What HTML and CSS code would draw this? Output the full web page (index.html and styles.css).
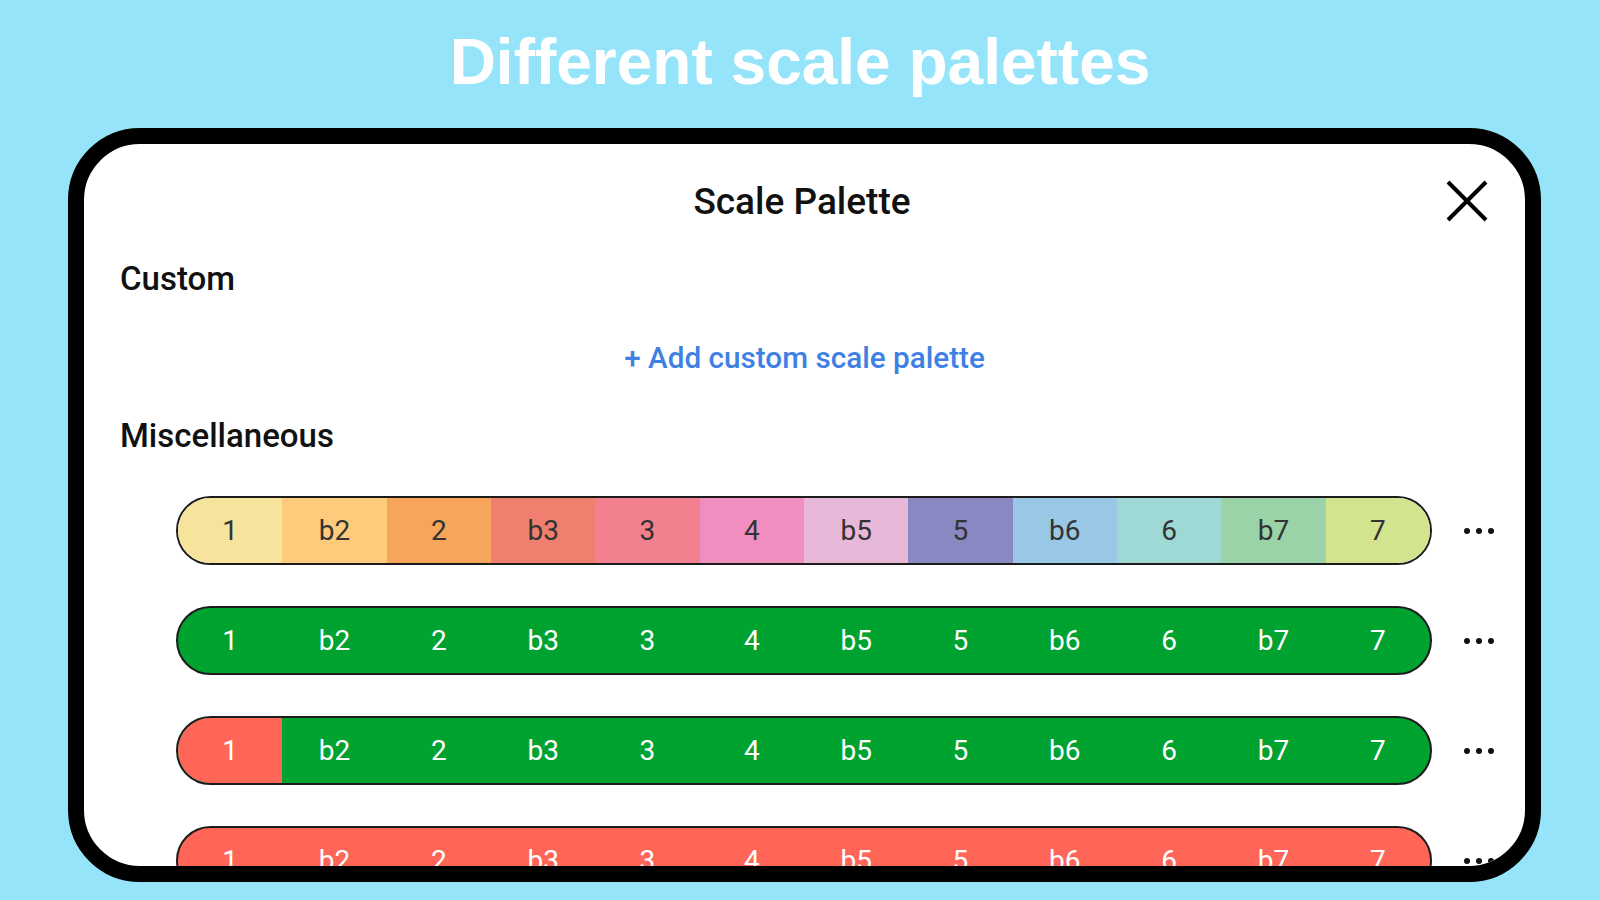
FILE: index.html
```html
<!DOCTYPE html>
<html>
<head>
<meta charset="utf-8">
<link rel="stylesheet" href="styles.css">
</head>
<body>
<h1 class="title">Different scale palettes</h1>
<div class="frame">
  <div class="header">
    <div></div>
    <div class="header-title">Scale Palette</div>
    <div class="close">
      <svg width="42" height="42" viewBox="0 0 42 42"><path d="M2 2 L40 40 M40 2 L2 40" stroke="#000" stroke-width="4" fill="none"/></svg>
    </div>
  </div>
  <div class="label">Custom</div>
  <div class="add">+ Add custom scale palette</div>
  <div class="label label-misc">Miscellaneous</div>
  <div class="rows">
    <div class="row">
      <div class="bar bar-color">
        <span class="c1">1</span><span class="c2">b2</span><span class="c3">2</span><span class="c4">b3</span><span class="c5">3</span><span class="c6">4</span><span class="c7">b5</span><span class="c8">5</span><span class="c9">b6</span><span class="c10">6</span><span class="c11">b7</span><span class="c12">7</span>
      </div>
      <div class="dots"><svg width="32" height="8" viewBox="0 0 32 8"><circle cx="4" cy="4" r="3"/><circle cx="16" cy="4" r="3"/><circle cx="28" cy="4" r="3"/></svg></div>
    </div>
    <div class="row">
      <div class="bar bar-green">
        <span>1</span><span>b2</span><span>2</span><span>b3</span><span>3</span><span>4</span><span>b5</span><span>5</span><span>b6</span><span>6</span><span>b7</span><span>7</span>
      </div>
      <div class="dots"><svg width="32" height="8" viewBox="0 0 32 8"><circle cx="4" cy="4" r="3"/><circle cx="16" cy="4" r="3"/><circle cx="28" cy="4" r="3"/></svg></div>
    </div>
    <div class="row">
      <div class="bar bar-green">
        <span class="red">1</span><span>b2</span><span>2</span><span>b3</span><span>3</span><span>4</span><span>b5</span><span>5</span><span>b6</span><span>6</span><span>b7</span><span>7</span>
      </div>
      <div class="dots"><svg width="32" height="8" viewBox="0 0 32 8"><circle cx="4" cy="4" r="3"/><circle cx="16" cy="4" r="3"/><circle cx="28" cy="4" r="3"/></svg></div>
    </div>
    <div class="row">
      <div class="bar bar-red">
        <span>1</span><span>b2</span><span>2</span><span>b3</span><span>3</span><span>4</span><span>b5</span><span>5</span><span>b6</span><span>6</span><span>b7</span><span>7</span>
      </div>
      <div class="dots"><svg width="32" height="8" viewBox="0 0 32 8"><circle cx="4" cy="4" r="3"/><circle cx="16" cy="4" r="3"/><circle cx="28" cy="4" r="3"/></svg></div>
    </div>
  </div>
</div>
</body>
</html>
```
FILE: styles.css
```css
* { box-sizing: border-box; }
html, body {
  margin: 0;
  padding: 0;
}
body {
  width: 1600px;
  height: 900px;
  overflow: hidden;
  background: #95e4fa;
  font-family: Roboto, "Noto Sans", sans-serif;
}
.title {
  margin: 0;
  padding-top: 24px;
  height: 100px;
  line-height: 76px;
  text-align: center;
  font-family: "Liberation Sans", Arial, sans-serif;
  font-weight: bold;
  font-size: 64px;
  color: #ffffff;
}
.frame {
  margin: 28px 0 0 68px;
  width: 1473px;
  height: 754px;
  border: 16px solid #000;
  border-radius: 72px;
  background: #fff;
  overflow: hidden;
}
.header {
  height: 112px;
  display: grid;
  grid-template-columns: 1fr auto 1fr;
  align-items: center;
}
.header-title {
  font-size: 37px;
  font-weight: 500;
  color: #111;
  padding-top: 3px;
  padding-right: 5px;
}
.close {
  justify-self: end;
  padding-right: 37px;
  display: flex;
  padding-top: 2px;
}
.label {
  height: 46px;
  line-height: 46px;
  padding-left: 36px;
  font-size: 33px;
  font-weight: 500;
  color: #111;
}
.label-misc {
  height: 44px;
  line-height: 44px;
}
.add {
  height: 112px;
  line-height: 112px;
  text-align: center;
  font-size: 29.7px;
  font-weight: 500;
  color: #3f80e4;
}
.rows {
  padding-top: 38px;
  padding-left: 92px;
  display: flex;
  flex-direction: column;
  gap: 41px;
}
.row {
  display: flex;
  align-items: center;
  flex-shrink: 0;
}
.bar {
  width: 1256px;
  height: 69px;
  border: 2px solid #1c1c1c;
  border-radius: 35px;
  overflow: hidden;
  display: grid;
  grid-template-columns: repeat(12, 1fr);
  flex-shrink: 0;
}
.bar span {
  display: flex;
  align-items: center;
  justify-content: center;
  font-size: 28px;
  color: #fff;
}
.bar-color span { color: #333; }
.bar-green { background: #00a230; }
.bar-red { background: #ff6657; }
.bar .red { background: #ff6657; }
.c1 { background: #f6e39c; }
.c2 { background: #fdcb7b; }
.c3 { background: #f6a55a; }
.c4 { background: #f17f6f; }
.c5 { background: #f2808e; }
.c6 { background: #f08fbf; }
.c7 { background: #e8b8d8; }
.c8 { background: #8a88c2; }
.c9 { background: #98c8e6; }
.c10 { background: #9fd9d6; }
.c11 { background: #9bd3a9; }
.c12 { background: #d3e48f; }
.dots {
  margin-left: 31px;
  display: flex;
}
.dots svg { fill: #111; }
```
